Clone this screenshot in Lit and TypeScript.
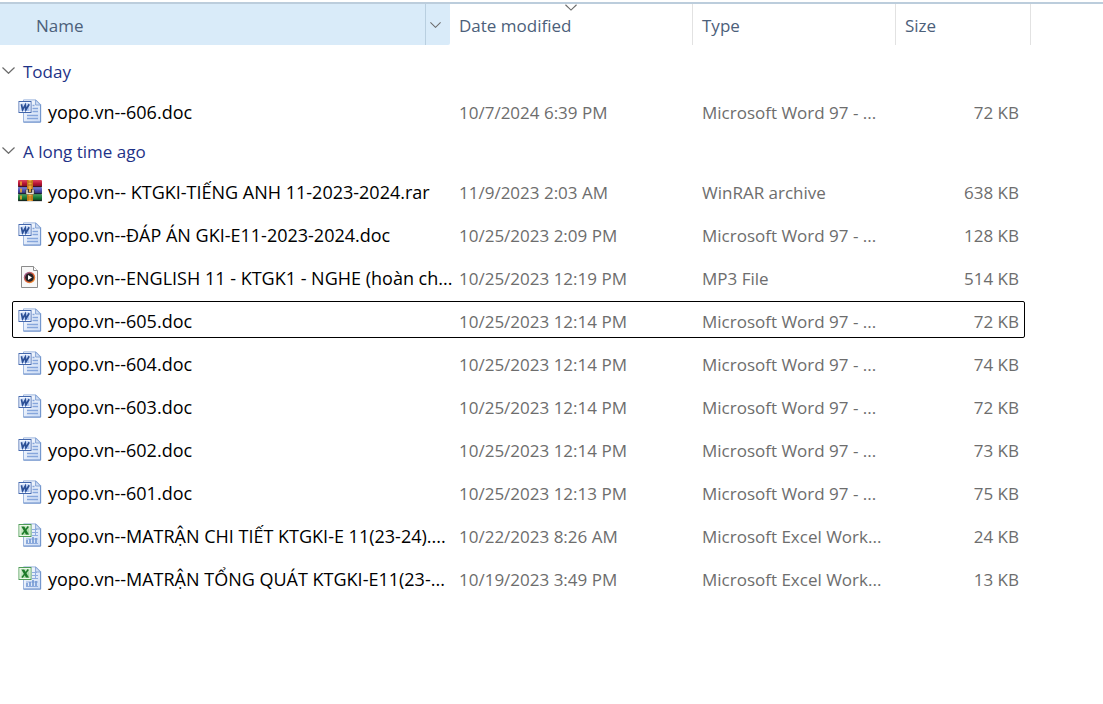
import { LitElement, html, css, svg } from "lit";
import { customElement, property, state } from "lit/decorators.js";

type Kind = "word" | "excel" | "rar" | "audio";

interface FileItem {
  name: string;
  kind: Kind;
  date: string;
  type: string;
  size: string;
  focused?: boolean;
}

interface Group {
  label: string;
  files: FileItem[];
}

const WORD = "Microsoft Word 97 - ...";
const EXCEL = "Microsoft Excel Work...";

const GROUPS: Group[] = [
  {
    label: "Today",
    files: [{ name: "yopo.vn--606.doc", kind: "word", date: "10/7/2024 6:39 PM", type: WORD, size: "72 KB" }],
  },
  {
    label: "A long time ago",
    files: [
      { name: "yopo.vn-- KTGKI-TIẾNG ANH 11-2023-2024.rar", kind: "rar", date: "11/9/2023 2:03 AM", type: "WinRAR archive", size: "638 KB" },
      { name: "yopo.vn--ĐÁP ÁN GKI-E11-2023-2024.doc", kind: "word", date: "10/25/2023 2:09 PM", type: WORD, size: "128 KB" },
      { name: "yopo.vn--ENGLISH 11 - KTGK1 - NGHE (hoàn ch...", kind: "audio", date: "10/25/2023 12:19 PM", type: "MP3 File", size: "514 KB" },
      { name: "yopo.vn--605.doc", kind: "word", date: "10/25/2023 12:14 PM", type: WORD, size: "72 KB", focused: true },
      { name: "yopo.vn--604.doc", kind: "word", date: "10/25/2023 12:14 PM", type: WORD, size: "74 KB" },
      { name: "yopo.vn--603.doc", kind: "word", date: "10/25/2023 12:14 PM", type: WORD, size: "72 KB" },
      { name: "yopo.vn--602.doc", kind: "word", date: "10/25/2023 12:14 PM", type: WORD, size: "73 KB" },
      { name: "yopo.vn--601.doc", kind: "word", date: "10/25/2023 12:13 PM", type: WORD, size: "75 KB" },
      { name: "yopo.vn--MATRẬN CHI TIẾT KTGKI-E 11(23-24)....", kind: "excel", date: "10/22/2023 8:26 AM", type: EXCEL, size: "24 KB" },
      { name: "yopo.vn--MATRẬN TỔNG QUÁT KTGKI-E11(23-...", kind: "excel", date: "10/19/2023 3:49 PM", type: EXCEL, size: "13 KB" },
    ],
  },
];

const officeSheet = svg`
  <path d="M5.5 .9H18l4.6 4.6v17.6H5.5z" fill="url(#sheet)" stroke="#9db6de"/>
  <path d="M5.5 23.1h17.1V5.5" fill="none" stroke="#6f93cc"/>
  <path d="M17.6 1v5h5z" fill="#d3e0f5" stroke="#7f9fd3" stroke-width=".9"/>`;

const pictures = {
  word: svg`
    ${officeSheet}
    <path d="M14.5 6.5h2M14.5 9.5h5.5M14.5 12.5h5.5M9 16.5h11M9 19.5h11" stroke="#86a6dc" stroke-width="1.4"/>
    <rect x="1" y="2.5" width="12" height="11" fill="url(#wordTile)" stroke="#4468ad"/>
    <rect x="2" y="3.5" width="10" height="9" fill="none" stroke="#f4f8ff" stroke-width="1"/>
    <path d="M3.4 5.2 4.6 10.700 7.300 6 7.900 10.700 11.200 5.200" fill="none" stroke="#2c5096" stroke-width="1.700"/>`,
  excel: svg`
    ${officeSheet}
    <path d="M14 6.5h5M14 9.5h6M14 12.5h6M8 16h12M8 20.5h12M17.5 7v5.500" stroke="#8eacdf" stroke-width="1"/>
    <path d="M9 20v-3M12 20v-4M15 20v-6M18 20v-5" stroke="#6c92d0" stroke-width="1.500"/>
    <rect x="1" y="1.500" width="12" height="12" fill="url(#excelTile)" stroke="#4f9c57"/>
    <rect x="2" y="2.500" width="10" height="10" fill="none" stroke="#edf8ea"/>
    <path d="M3.300 3.500h3L10.900 11.500H8z" fill="#1d7a2a"/>
    <path d="M10.300 3.500 4 11.500" stroke="#1d7a2a" stroke-width="1.500"/>`,
  rar: svg`
    <rect x="0" y="1" width="24" height="7" rx="1" fill="url(#bookRed)"/>
    <rect x="0" y="8" width="24" height="7" rx="1" fill="url(#bookBlue)"/>
    <rect x="0" y="15" width="24" height="7" rx="1" fill="url(#bookGreen)"/>
    <path d="M3 2.500v4M3 9.500v4M3 16.500v4" stroke="#f0a92c" stroke-width="1.600"/>
    <path d="M0 7.700h24M0 14.700h24M0 21.700h24" stroke="#191622" stroke-width=".8"/>
    <rect x="9" y="1" width="6" height="21" fill="url(#strap)"/>
    <path d="M10 3h4M10 6h4M10 18h4M10 20h4" stroke="#9d5c12" stroke-width=".8"/>
    <rect x="7.500" y="10" width="9" height="5.500" rx="1.500" fill="#3d332b"/>
    <path d="M9 10.500v4h6v-4" fill="none" stroke="#e5e1d8" stroke-width="1.500"/>
    <path d="M12 9v4" stroke="#f0ad37" stroke-width="1.800"/>`,
  audio: svg`
    <path d="M3.500 1.500h12l4 4v17h-16z" fill="#f8f8f8" stroke="#8b8b8b"/>
    <path d="M15.500 1.500v4h4" fill="#fff" stroke="#8b8b8b"/>
    <circle cx="11.500" cy="12.500" r="5.700" fill="url(#disc)"/>
    <circle cx="11.500" cy="12.500" r="4.300" fill="#242226"/>
    <path d="M10 10v5l4-2.500z" fill="#fff"/>`,
};

@customElement("file-icon")
class FileIcon extends LitElement {
  @property() kind: Kind = "word";

  static styles = css`
    :host {
      display: block;
      width: 24px;
      height: 24px;
      flex: none;
    }
    .art {
      display: block;
    }
  `;

  render() {
    return html`<svg class="art" width="24" height="24" viewBox="0 0 24 24" aria-hidden="true">
      <defs>
        <linearGradient id="sheet" x2="1" y2="1"><stop stop-color="#fff"/><stop offset="1" stop-color="#c9daf5"/></linearGradient>
        <linearGradient id="wordTile" x2="1" y2="1"><stop stop-color="#eef4ff"/><stop offset="1" stop-color="#94b4ec"/></linearGradient>
        <linearGradient id="excelTile" x2="1" y2="1"><stop stop-color="#eaf7e6"/><stop offset="1" stop-color="#8bcb8a"/></linearGradient>
        <linearGradient id="bookRed" x2="0" y2="1"><stop stop-color="#e0485e"/><stop offset=".5" stop-color="#b81536"/><stop offset="1" stop-color="#7a0a20"/></linearGradient>
        <linearGradient id="bookBlue" x2="0" y2="1"><stop stop-color="#7f86de"/><stop offset=".5" stop-color="#4a50ad"/><stop offset="1" stop-color="#272a68"/></linearGradient>
        <linearGradient id="bookGreen" x2="0" y2="1"><stop stop-color="#4fa665"/><stop offset=".5" stop-color="#1c7c3a"/><stop offset="1" stop-color="#0a4219"/></linearGradient>
        <linearGradient id="strap"><stop stop-color="#b86a12"/><stop offset=".5" stop-color="#f8bb48"/><stop offset="1" stop-color="#b9690f"/></linearGradient>
        <linearGradient id="disc" x2="1" y2="1"><stop stop-color="#7d5bb5"/><stop offset=".5" stop-color="#e0603a"/><stop offset="1" stop-color="#f39a2c"/></linearGradient>
      </defs>
      ${pictures[this.kind]}
    </svg>`;
  }
}

@customElement("app-root")
class AppRoot extends LitElement {
  @state() private closed: string[] = [];

  static styles = css`
    :host {
      display: block;
      min-height: 100vh;
      box-sizing: border-box;
      padding-top: 2px;
      background: #fff;
      font-family: "Open Sans", "Noto Sans", sans-serif;
      font-size: 17px;
      line-height: 24px;
      color: #6d6d6d;
    }
    button {
      font: inherit;
      color: inherit;
      background: none;
      border: 0;
      margin: 0;
      padding: 0;
      text-align: left;
    }
    .files {
      width: 100%;
      table-layout: fixed;
      border-collapse: separate;
      border-spacing: 0;
      border-top: 2px solid #bccddc;
    }
    .col-date {
      width: 243px;
    }
    .col-type {
      width: 203px;
    }
    .col-size {
      width: 135px;
    }
    .col-rest {
      width: 72px;
    }
    th,
    td {
      padding: 0;
      white-space: nowrap;
      font-weight: 400;
      text-align: left;
      box-sizing: border-box;
    }
    .head {
      position: relative;
      height: 41px;
      border-right: 1px solid #e2e2e2;
      color: #4c607a;
    }
    .head-name {
      border-right: 0;
    }
    .name-bar {
      display: flex;
      height: 41px;
      background: #d9ebf9;
      border-radius: 0 0 2px 0;
    }
    .sort {
      display: block;
      width: 100%;
      height: 41px;
      padding: 2px 9px 0;
    }
    .name-bar .sort {
      flex: 1;
      padding-left: 36px;
    }
    .filter {
      display: flex;
      align-items: center;
      width: 25px;
      padding-left: 4px;
      border-left: 1px solid #b9cfe0;
    }
    .sort-mark {
      position: absolute;
      top: 0;
      left: 50%;
      margin-left: -6px;
    }
    .chevron {
      display: block;
      fill: none;
      stroke: #6b6b6b;
      stroke-width: 1.2;
    }
    .group-head {
      height: 37px;
      color: #1e3287;
    }
    .first .group-head {
      height: 44px;
      padding-top: 7px;
    }
    .toggle {
      display: flex;
      align-items: center;
      gap: 8px;
      padding-left: 2px;
    }
    .label {
      padding-top: 2px;
    }
    .row {
      position: relative;
      height: 43px;
    }
    .cell {
      padding: 4px 9px 0;
    }
    .cell-name {
      color: #000;
      font-size: 18px;
    }
    .entry {
      display: flex;
      align-items: center;
      gap: 6px;
      padding-left: 18px;
    }
    .cell-size {
      padding-right: 12px;
      text-align: right;
    }
    .focused .cell-rest::after {
      content: "";
      position: absolute;
      inset: 3px 78px 3px 12px;
      border: 1px solid #000;
      border-radius: 2px;
      pointer-events: none;
    }
  `;

  private toggle(label: string) {
    this.closed = this.closed.includes(label) ? this.closed.filter((l) => l !== label) : [...this.closed, label];
  }

  private chevron(width: number, height: number, extra = "") {
    return html`<svg class="chevron ${extra}" width=${width} height=${height} viewBox="0 0 13 7" aria-hidden="true">
      <path d="M.5 .5 6.500 6.300 12.500 .5" />
    </svg>`;
  }

  private row(f: FileItem) {
    return html`<tr class="row ${f.focused ? "focused" : ""}">
      <td class="cell-name">
        <div class="entry"><file-icon kind=${f.kind}></file-icon><span class="label">${f.name}</span></div>
      </td>
      <td class="cell">${f.date}</td>
      <td class="cell">${f.type}</td>
      <td class="cell cell-size">${f.size}</td>
      <td class="cell-rest"></td>
    </tr>`;
  }

  render() {
    return html`<table class="files">
      <colgroup>
        <col />
        <col class="col-date" />
        <col class="col-type" />
        <col class="col-size" />
        <col class="col-rest" />
      </colgroup>
      <thead>
        <tr>
          <th class="head head-name" scope="col">
            <div class="name-bar">
              <button class="sort">Name</button>
              <button class="filter" aria-label="Filter by name">${this.chevron(11, 6)}</button>
            </div>
          </th>
          <th class="head" scope="col" aria-sort="descending">
            <button class="sort">Date modified</button>${this.chevron(12, 7, "sort-mark")}
          </th>
          <th class="head" scope="col"><button class="sort">Type</button></th>
          <th class="head" scope="col"><button class="sort">Size</button></th>
          <td></td>
        </tr>
      </thead>
      ${GROUPS.map((g, i) => {
        const open = !this.closed.includes(g.label);
        return html`<tbody class=${i === 0 ? "first" : ""}>
          <tr>
            <th class="group-head" colspan="5" scope="rowgroup">
              <button class="toggle" aria-expanded=${open} @click=${() => this.toggle(g.label)}>
                ${this.chevron(13, 7)}<span class="label">${g.label}</span>
              </button>
            </th>
          </tr>
          ${open ? g.files.map((f) => this.row(f)) : ""}
        </tbody>`;
      })}
    </table>`;
  }
}
